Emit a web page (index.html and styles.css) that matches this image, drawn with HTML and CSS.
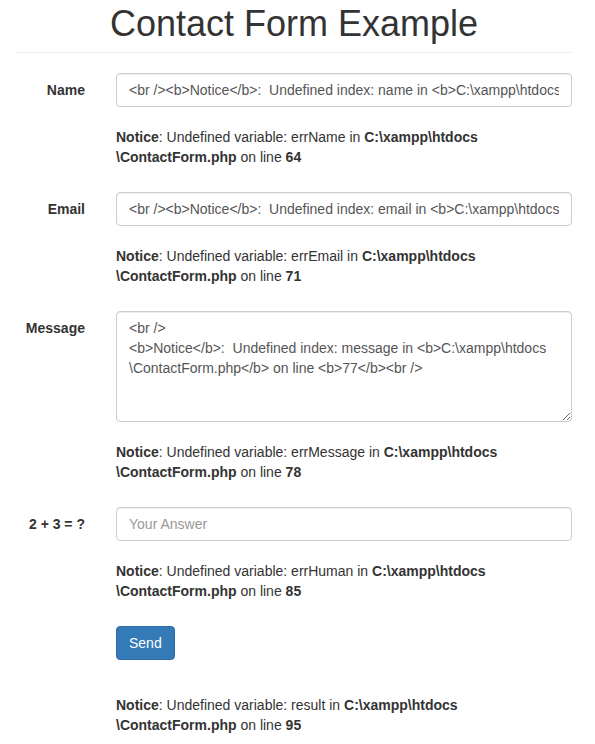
FILE: index.html
```html
<!DOCTYPE html>
<html lang="en">
<head>
  <meta charset="UTF-8">
  <title>Contact Form Example</title>
  <link rel="stylesheet" href="styles.css">
</head>
<body>
  <div class="container">
    <h1 class="page-title">Contact Form Example</h1>
    <hr class="divider">

    <form class="contact-form">
      <div class="form-group">
        <label class="control-label" for="name">Name</label>
        <div class="field">
          <input type="text" id="name" class="form-control" value="<br /><b>Notice</b>:  Undefined index: name in <b>C:\xampp\htdocs\ContactForm.php</b> on line <b>63</b><br />">
          <p class="notice"><b>Notice</b>: Undefined variable: errName in <b>C:\xampp\htdocs<br>\ContactForm.php</b> on line <b>64</b></p>
        </div>
      </div>

      <div class="form-group">
        <label class="control-label" for="email">Email</label>
        <div class="field">
          <input type="text" id="email" class="form-control" value="<br /><b>Notice</b>:  Undefined index: email in <b>C:\xampp\htdocs\ContactForm.php</b> on line <b>70</b><br />">
          <p class="notice"><b>Notice</b>: Undefined variable: errEmail in <b>C:\xampp\htdocs<br>\ContactForm.php</b> on line <b>71</b></p>
        </div>
      </div>

      <div class="form-group">
        <label class="control-label" for="message">Message</label>
        <div class="field">
          <textarea id="message" class="form-control message-box">&lt;br /&gt;
&lt;b&gt;Notice&lt;/b&gt;:  Undefined index: message in &lt;b&gt;C:\xampp\htdocs
\ContactForm.php&lt;/b&gt; on line &lt;b&gt;77&lt;/b&gt;&lt;br /&gt;
</textarea>
          <p class="notice"><b>Notice</b>: Undefined variable: errMessage in <b>C:\xampp\htdocs<br>\ContactForm.php</b> on line <b>78</b></p>
        </div>
      </div>

      <div class="form-group">
        <label class="control-label" for="human">2 + 3 = ?</label>
        <div class="field">
          <input type="text" id="human" class="form-control" placeholder="Your Answer">
          <p class="notice"><b>Notice</b>: Undefined variable: errHuman in <b>C:\xampp\htdocs<br>\ContactForm.php</b> on line <b>85</b></p>
        </div>
      </div>

      <div class="form-group">
        <div class="field field-offset">
          <button type="button" class="btn btn-primary">Send</button>
          <p class="notice notice-result"><b>Notice</b>: Undefined variable: result in <b>C:\xampp\htdocs<br>\ContactForm.php</b> on line <b>95</b></p>
        </div>
      </div>
    </form>
  </div>
</body>
</html>
```

FILE: styles.css
```css
html, body {
  margin: 0;
  padding: 0;
  background: #fff;
}

body {
  font-family: "Liberation Sans", Arial, Helvetica, sans-serif;
  font-size: 14px;
  line-height: 20px;
  color: #333;
}

.container {
  width: 556px;
  margin-left: 16px;
}

.page-title {
  margin: 4px 0 8px;
  font-size: 36px;
  font-weight: 500;
  line-height: 1.1;
  text-align: center;
}

.divider {
  margin: 0 0 20px;
  border: 0;
  border-top: 1px solid #eee;
}

.form-group {
  display: grid;
  grid-template-columns: 69px 456px;
  column-gap: 31px;
}

.control-label {
  padding-top: 7px;
  font-weight: bold;
  text-align: right;
}

.field-offset {
  grid-column: 2;
}

.form-control {
  display: block;
  box-sizing: border-box;
  width: 100%;
  height: 34px;
  margin: 0;
  padding: 6px 12px;
  font-family: inherit;
  font-size: 14px;
  line-height: 20px;
  color: #555;
  background: #fff;
  border: 1px solid #ccc;
  border-radius: 4px;
  box-shadow: inset 0 1px 1px rgba(0, 0, 0, 0.075);
}

.form-control::placeholder {
  color: #999;
}

.message-box {
  height: 111px;
  resize: vertical;
  overflow: hidden;
}

.notice {
  margin: 20px 0 25px;
}

.notice-result {
  margin-top: 35px;
  margin-bottom: 0;
}

.btn {
  display: inline-block;
  padding: 6px 12px;
  font-family: inherit;
  font-size: 14px;
  line-height: 20px;
  border: 1px solid transparent;
  border-radius: 4px;
  cursor: pointer;
}

.btn-primary {
  color: #fff;
  background: #337ab7;
  border-color: #2e6da4;
}
```
